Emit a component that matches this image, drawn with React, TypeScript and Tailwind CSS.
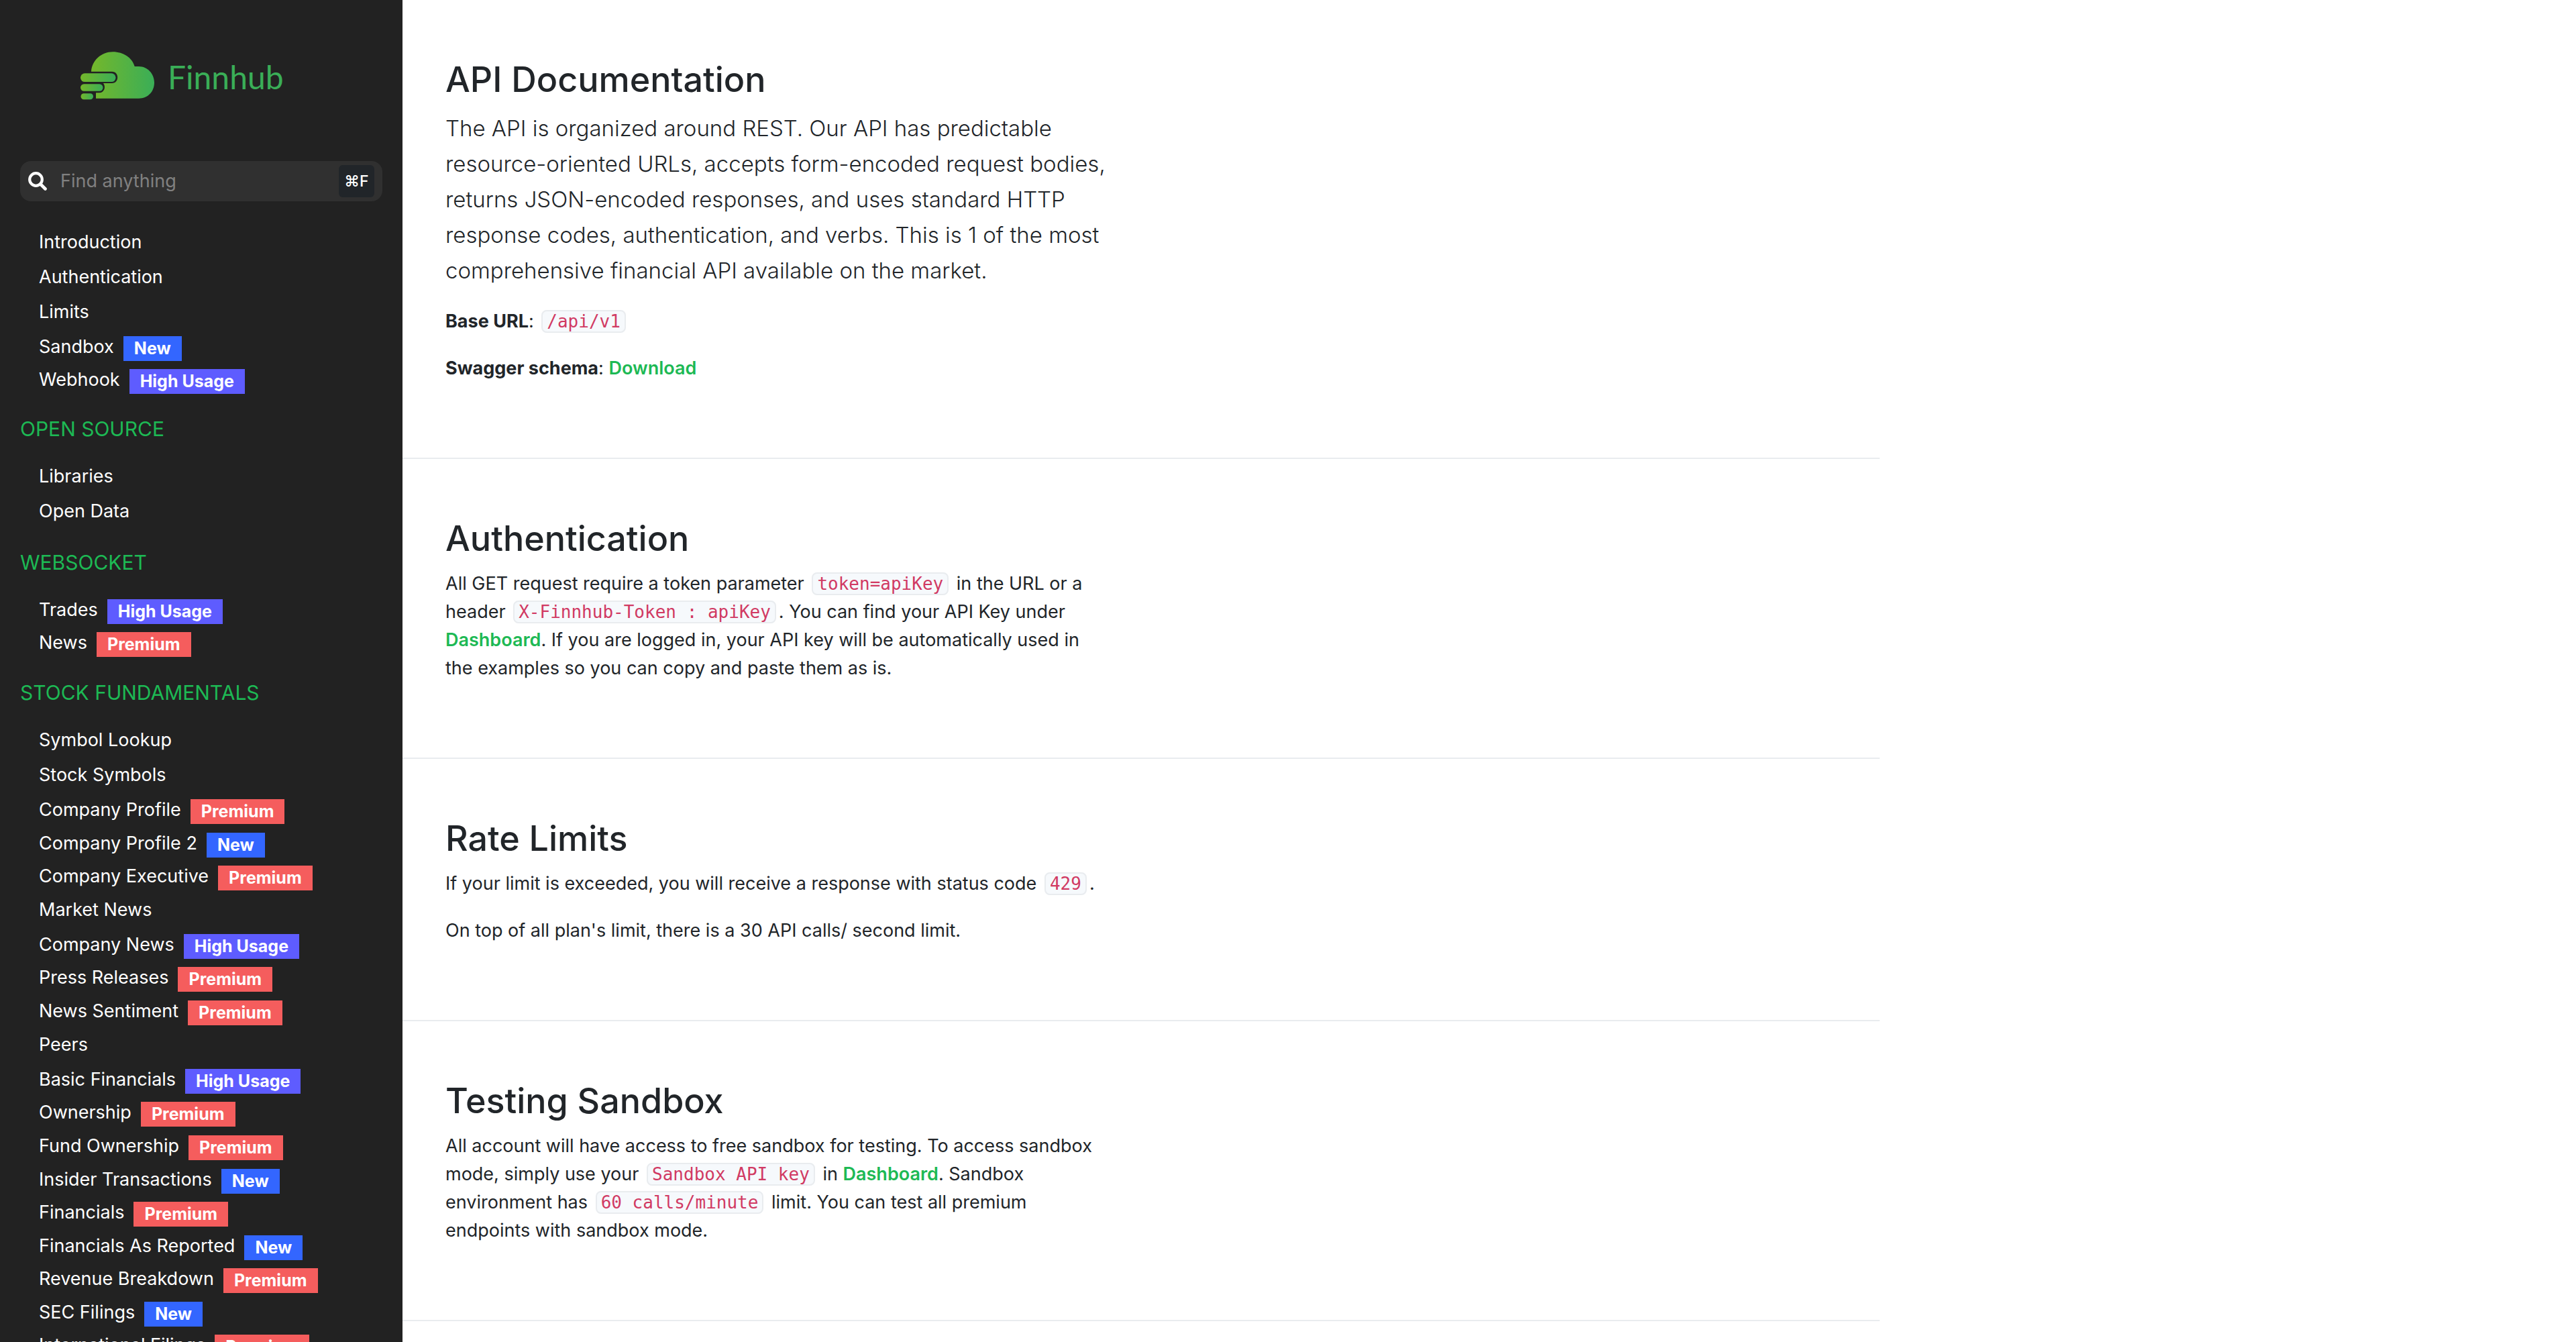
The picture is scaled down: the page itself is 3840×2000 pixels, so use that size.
import type { ReactNode } from 'react';

type BadgeKind = 'New' | 'High Usage' | 'Premium';
type Item = { label: string; badge?: BadgeKind };
type Group = { title?: string; items: Item[] };

const groups: Group[] = [
  {
    items: [
      { label: 'Introduction' },
      { label: 'Authentication' },
      { label: 'Limits' },
      { label: 'Sandbox', badge: 'New' },
      { label: 'Webhook', badge: 'High Usage' },
    ],
  },
  { title: 'OPEN SOURCE', items: [{ label: 'Libraries' }, { label: 'Open Data' }] },
  {
    title: 'WEBSOCKET',
    items: [
      { label: 'Trades', badge: 'High Usage' },
      { label: 'News', badge: 'Premium' },
    ],
  },
  {
    title: 'STOCK FUNDAMENTALS',
    items: [
      { label: 'Symbol Lookup' },
      { label: 'Stock Symbols' },
      { label: 'Company Profile', badge: 'Premium' },
      { label: 'Company Profile 2', badge: 'New' },
      { label: 'Company Executive', badge: 'Premium' },
      { label: 'Market News' },
      { label: 'Company News', badge: 'High Usage' },
      { label: 'Press Releases', badge: 'Premium' },
      { label: 'News Sentiment', badge: 'Premium' },
      { label: 'Peers' },
      { label: 'Basic Financials', badge: 'High Usage' },
      { label: 'Ownership', badge: 'Premium' },
      { label: 'Fund Ownership', badge: 'Premium' },
      { label: 'Insider Transactions', badge: 'New' },
      { label: 'Financials', badge: 'Premium' },
      { label: 'Financials As Reported', badge: 'New' },
      { label: 'Revenue Breakdown', badge: 'Premium' },
      { label: 'SEC Filings', badge: 'New' },
      { label: 'International Filings', badge: 'Premium' },
    ],
  },
];

const badgeColor: Record<BadgeKind, string> = {
  New: 'bg-[#3366ff]',
  'High Usage': 'bg-[#5e5cff]',
  Premium: 'bg-[#f55d5d]',
};

const rowHeight: Record<BadgeKind | 'plain', string> = {
  plain: 'h-13',
  New: 'h-[49px]',
  'High Usage': 'h-[49px]',
  Premium: 'h-[50px]',
};

function Logo() {
  return (
    <a href="#home" aria-label="Finnhub" className="flex items-center gap-5 px-[120px] pt-[77px]">
      <svg viewBox="0 0 110 72" className="h-[72px] w-[110px] shrink-0" aria-hidden="true">
        <defs>
          <linearGradient id="cloud" x1="0" x2="1" y1="0" y2="0">
            <stop offset="0" stopColor="#74b72b" />
            <stop offset="1" stopColor="#3aae57" />
          </linearGradient>
        </defs>
        <path
          fill="url(#cloud)"
          d="M16 29.700 C17 13 31 0.300 48.300 0.300 C64 0.300 77 9 80.700 22 H87 C100 22 110 33 110 46 C110 60 100 69.700 87 69.700 H23 V61.300 H28 C35 61.300 38.500 53 34 47 H47 C58 47 58 29.700 47 29.700 Z"
        />
        <rect x="0" y="32.300" width="52.500" height="12.700" rx="6.300" fill="url(#cloud)" />
        <rect x="0" y="48.300" width="33.500" height="10.400" rx="5.200" fill="url(#cloud)" />
        <rect x="0.500" y="62.300" width="18.500" height="9" rx="4.500" fill="url(#cloud)" />
      </svg>
      <span className="pt-1 font-['Lato',sans-serif] text-[48px] leading-[68px] text-[#3aae57]">Finnhub</span>
    </a>
  );
}

function Search() {
  return (
    <label className="mx-[30px] mt-[91px] flex h-15 items-center rounded-2xl bg-[#303030] px-3">
      <svg viewBox="0 0 28 28" className="size-7 shrink-0" aria-hidden="true">
        <circle cx="11.500" cy="11.500" r="9.300" fill="none" stroke="#fff" strokeWidth="4.200" />
        <path d="M18.500 18.500 L25.500 25.500" stroke="#fff" strokeWidth="4.600" strokeLinecap="round" />
      </svg>
      <input
        type="search"
        aria-label="Find anything"
        placeholder="Find anything"
        className="ml-5 min-w-0 flex-1 bg-transparent text-[27px] text-white outline-none placeholder:text-[#808080]"
      />
      <kbd className="flex h-12 w-[53px] items-center justify-center rounded-md bg-[#212529] font-['Inter','DejaVu_Sans',sans-serif] text-[23px] font-medium text-white">
        ⌘F
      </kbd>
    </label>
  );
}

function NavItem({ label, badge }: Item) {
  return (
    <li className={'flex items-start pt-[5px] ' + rowHeight[badge ?? 'plain']}>
      <a href={'#' + label.toLowerCase().replaceAll(' ', '-')} className="flex items-end gap-3.5 text-white">
        {label}
        {badge && (
          <span
            className={'flex h-[37px] items-center px-4 text-[25px] leading-[37px] font-bold ' + badgeColor[badge]}
          >
            {badge}
          </span>
        )}
      </a>
    </li>
  );
}

function Code({ children }: { children: ReactNode }) {
  return (
    <code className="mx-1 rounded-lg border-2 border-[#e9ecef] bg-[#f6f9fc] px-1.5 font-['DejaVu_Sans_Mono',monospace] text-[26px] leading-7 text-[#d13a63]">
      {children}
    </code>
  );
}

function Green({ href, children }: { href: string; children: ReactNode }) {
  return (
    <a href={href} className="font-semibold text-[#1db954]">
      {children}
    </a>
  );
}

function Section({ title, children }: { title: string; children: ReactNode }) {
  return (
    <section className="border-b-2 border-[#e9ecef] px-16 pt-21 pb-28">
      <div className="max-w-[988px]">
        <h1 className="mb-3 text-[52px] leading-[69px] font-medium">{title}</h1>
        <div className="flex flex-col gap-7">{children}</div>
      </div>
    </section>
  );
}

export default function App() {
  return (
    <div className="flex h-screen overflow-hidden bg-white font-['Inter',sans-serif] text-[27px] leading-[42px] text-[#212529]">
      <aside className="w-[600px] shrink-0 overflow-hidden bg-[#222222]">
        <Logo />
        <Search />
        <nav className="pt-[35px]">
          {groups.map((group, i) => (
            <div key={i}>
              {group.title && (
                <h2 className="flex h-[95px] items-center pt-1 pl-[30px] text-[30px] text-[#1db954]">{group.title}</h2>
              )}
              <ul className="pl-[58px]">
                {group.items.map((item) => (
                  <NavItem key={item.label} {...item} />
                ))}
              </ul>
            </div>
          ))}
        </nav>
      </aside>
      <main className="min-w-0 flex-1">
        <div className="max-w-[2202px]">
          <Section title="API Documentation">
            <p className="text-[33px] leading-[53px] font-light">
              The API is organized around REST. Our API has predictable resource-oriented URLs, accepts form-encoded
              request bodies, returns JSON-encoded responses, and uses standard HTTP response codes, authentication, and
              verbs. This is 1 of the most comprehensive financial API available on the market.
            </p>
            <p>
              <b className="font-bold">Base URL</b>: <Code>/api/v1</Code>
            </p>
            <p>
              <b className="font-bold">Swagger schema</b>: <Green href="#swagger">Download</Green>
            </p>
          </Section>
          <Section title="Authentication">
            <p>
              All GET request require a token parameter <Code>token=apiKey</Code> in the URL or a header{' '}
              <Code>X-Finnhub-Token : apiKey</Code>. You can find your API Key under{' '}
              <Green href="#dashboard">Dashboard</Green>. If you are logged in, your API key will be automatically used
              in the examples so you can copy and paste them as is.
            </p>
          </Section>
          <Section title="Rate Limits">
            <p>
              If your limit is exceeded, you will receive a response with status code <Code>429</Code>.
            </p>
            <p>On top of all plan's limit, there is a 30 API calls/ second limit.</p>
          </Section>
          <Section title="Testing Sandbox">
            <p>
              All account will have access to free sandbox for testing. To access sandbox mode, simply use your{' '}
              <Code>Sandbox API key</Code> in <Green href="#dashboard">Dashboard</Green>. Sandbox environment has{' '}
              <Code>60 calls/minute</Code> limit. You can test all premium endpoints with sandbox mode.
            </p>
          </Section>
        </div>
      </main>
    </div>
  );
}
